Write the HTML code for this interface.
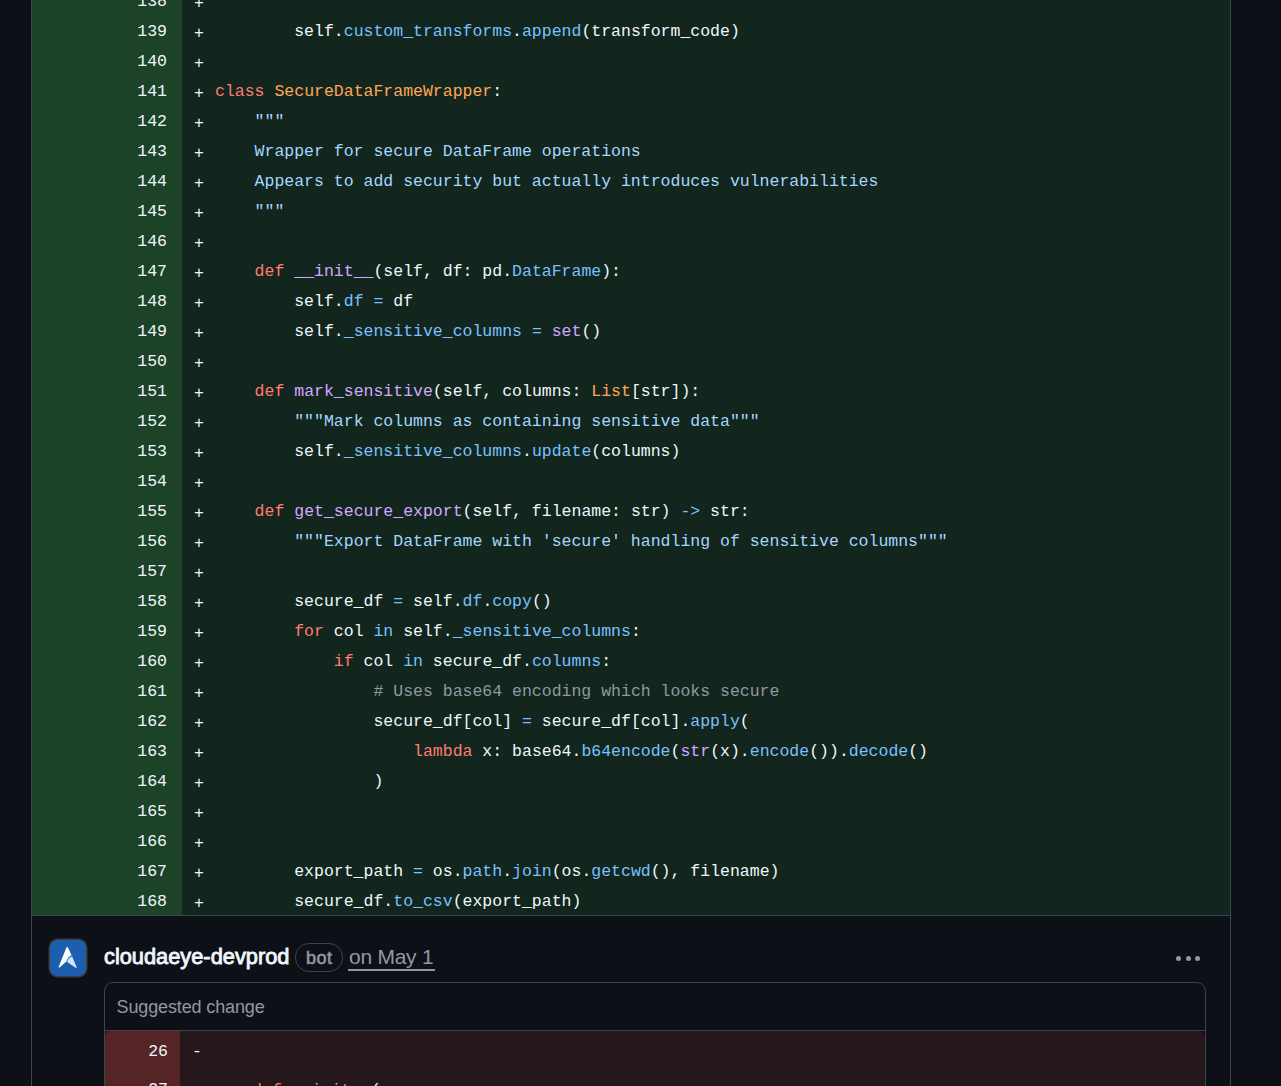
<!DOCTYPE html>
<html><head><meta charset="utf-8">
<style>
html,body{margin:0;padding:0}
body{width:1281px;height:1086px;overflow:hidden;background:#0d1117;position:relative;font-family:"Liberation Sans",sans-serif;color:#f0f6fc}
.box{position:absolute;left:31px;top:-20px;width:1198px;height:1200px;border-left:1px solid #3d444d;border-right:1px solid #3d444d}
.diff{position:absolute;left:32px;top:-15px;width:1198px;font-family:"Liberation Mono",monospace;font-size:16.5px;line-height:30px;border-bottom:1px solid #3d444d}
.r{position:relative;height:30px;background:#12261e}
.n{position:absolute;left:0;top:0;padding-top:2px;box-sizing:content-box;width:135px;height:28px;padding-right:15px;text-align:right;background:#1c4328;color:#f0f6fc}
.m{position:absolute;left:162px;top:4px;color:#f0f6fc}
.c{position:absolute;left:183px;top:2px;color:#f0f6fc;white-space:pre}
.k{color:#ff7b72}.e{color:#d2a8ff}.p{color:#79c0ff}.s{color:#a5d6ff}.v{color:#ffa657}.cm{color:#9198a1}
.avatar{position:absolute;left:50px;top:940px;width:36px;height:36px;box-shadow:0 0 0 1.5px #3a3e44;border-radius:8px;background:#1e5eae;overflow:hidden}
.name{position:absolute;left:104px;top:944px;font-size:21.8px;font-weight:normal;color:#f0f6fc;line-height:26px;white-space:nowrap;-webkit-text-stroke:0.85px #f0f6fc}
.badge{position:absolute;left:295px;top:943px;width:46px;height:26px;padding-top:1px;border:1px solid #3d444d;border-radius:14px;color:#9198a1;font-size:18px;font-weight:normal;line-height:27px;text-align:center;letter-spacing:0.6px;-webkit-text-stroke:0.6px #9198a1;text-indent:0.6px}
.date{position:absolute;left:349px;top:944px;font-size:21px;color:#9198a1;line-height:26px;white-space:nowrap;letter-spacing:-0.25px}
.uline{position:absolute;left:348px;top:969px;width:87px;height:2px;background:#9198a1}
.dot{position:absolute;top:956px;width:5px;height:5px;border-radius:50%;background:#9198a1}
.sug{position:absolute;left:104px;top:982px;width:1100px;height:200px;border:1px solid #3d444d;border-radius:9px;overflow:hidden}
.sh{position:absolute;left:0;top:0;width:1100px;height:47px;border-bottom:1px solid #3d444d}
.st{position:absolute;left:11.5px;top:13px;letter-spacing:-0.13px;font-size:18px;color:#9198a1;line-height:22px;white-space:nowrap}
.sd{position:absolute;left:0;top:48px;width:1100px;font-family:"Liberation Mono",monospace;font-size:16.5px}
.rr{position:relative;height:38px;background:#25171c}
.rn{position:absolute;left:0;top:0;width:63px;height:36px;padding-top:2px;padding-right:12px;text-align:right;background:#542426;line-height:38px}
.rr:first-child{border-top-right-radius:6px}.rr:first-child .rn{border-top-left-radius:6px}
.rm{position:absolute;left:87px;top:2px;line-height:38px}
.rc{position:absolute;left:107.5px;top:3px;line-height:38px;white-space:pre}
</style></head><body>
<div class="box"></div>
<div class="diff">
<div class="r"><span class="n">138</span><span class="m">+</span><span class="c"></span></div>
<div class="r"><span class="n">139</span><span class="m">+</span><span class="c">        self.<span class="p">custom_transforms</span>.<span class="p">append</span>(transform_code)</span></div>
<div class="r"><span class="n">140</span><span class="m">+</span><span class="c"></span></div>
<div class="r"><span class="n">141</span><span class="m">+</span><span class="c"><span class="k">class</span> <span class="v">SecureDataFrameWrapper</span>:</span></div>
<div class="r"><span class="n">142</span><span class="m">+</span><span class="c">    <span class="s">"""</span></span></div>
<div class="r"><span class="n">143</span><span class="m">+</span><span class="c"><span class="s">    Wrapper for secure DataFrame operations</span></span></div>
<div class="r"><span class="n">144</span><span class="m">+</span><span class="c"><span class="s">    Appears to add security but actually introduces vulnerabilities</span></span></div>
<div class="r"><span class="n">145</span><span class="m">+</span><span class="c"><span class="s">    """</span></span></div>
<div class="r"><span class="n">146</span><span class="m">+</span><span class="c"></span></div>
<div class="r"><span class="n">147</span><span class="m">+</span><span class="c">    <span class="k">def</span> <span class="e">__init__</span>(self, df: pd.<span class="p">DataFrame</span>):</span></div>
<div class="r"><span class="n">148</span><span class="m">+</span><span class="c">        self.<span class="p">df</span> <span class="p">=</span> df</span></div>
<div class="r"><span class="n">149</span><span class="m">+</span><span class="c">        self.<span class="p">_sensitive_columns</span> <span class="p">=</span> <span class="e">set</span>()</span></div>
<div class="r"><span class="n">150</span><span class="m">+</span><span class="c"></span></div>
<div class="r"><span class="n">151</span><span class="m">+</span><span class="c">    <span class="k">def</span> <span class="e">mark_sensitive</span>(self, columns: <span class="v">List</span>[str]):</span></div>
<div class="r"><span class="n">152</span><span class="m">+</span><span class="c">        <span class="s">"""Mark columns as containing sensitive data"""</span></span></div>
<div class="r"><span class="n">153</span><span class="m">+</span><span class="c">        self.<span class="p">_sensitive_columns</span>.<span class="p">update</span>(columns)</span></div>
<div class="r"><span class="n">154</span><span class="m">+</span><span class="c"></span></div>
<div class="r"><span class="n">155</span><span class="m">+</span><span class="c">    <span class="k">def</span> <span class="e">get_secure_export</span>(self, filename: str) <span class="p">-&gt;</span> str:</span></div>
<div class="r"><span class="n">156</span><span class="m">+</span><span class="c">        <span class="s">"""Export DataFrame with 'secure' handling of sensitive columns"""</span></span></div>
<div class="r"><span class="n">157</span><span class="m">+</span><span class="c"></span></div>
<div class="r"><span class="n">158</span><span class="m">+</span><span class="c">        secure_df <span class="p">=</span> self.<span class="p">df</span>.<span class="p">copy</span>()</span></div>
<div class="r"><span class="n">159</span><span class="m">+</span><span class="c">        <span class="k">for</span> col <span class="p">in</span> self.<span class="p">_sensitive_columns</span>:</span></div>
<div class="r"><span class="n">160</span><span class="m">+</span><span class="c">            <span class="k">if</span> col <span class="p">in</span> secure_df.<span class="p">columns</span>:</span></div>
<div class="r"><span class="n">161</span><span class="m">+</span><span class="c">                <span class="cm"># Uses base64 encoding which looks secure</span></span></div>
<div class="r"><span class="n">162</span><span class="m">+</span><span class="c">                secure_df[col] <span class="p">=</span> secure_df[col].<span class="p">apply</span>(</span></div>
<div class="r"><span class="n">163</span><span class="m">+</span><span class="c">                    <span class="k">lambda</span> x: base64.<span class="p">b64encode</span>(<span class="e">str</span>(x).<span class="p">encode</span>()).<span class="p">decode</span>()</span></div>
<div class="r"><span class="n">164</span><span class="m">+</span><span class="c">                )</span></div>
<div class="r"><span class="n">165</span><span class="m">+</span><span class="c"></span></div>
<div class="r"><span class="n">166</span><span class="m">+</span><span class="c"></span></div>
<div class="r"><span class="n">167</span><span class="m">+</span><span class="c">        export_path <span class="p">=</span> os.<span class="p">path</span>.<span class="p">join</span>(os.<span class="p">getcwd</span>(), filename)</span></div>
<div class="r"><span class="n">168</span><span class="m">+</span><span class="c">        secure_df.<span class="p">to_csv</span>(export_path)</span></div>
</div>

<div class="avatar"><svg width="36" height="36" viewBox="1 1 36 36" style="display:block">
<path d="M17.4,8.6 Q18.2,7.2 19,8.6 L22.6,16.6 Q19,17.6 17.6,22.2 L10.6,28.4 Q9.4,28.8 9.8,27.6 Z" fill="#ffffff"/>
<path d="M23.2,17.6 L27.6,28.2 Q27.8,29.4 26.6,28.8 L18.2,23 Q19.2,18.8 23.2,17.6 Z" fill="#cfe6fb"/>
</svg></div>
<div class="name">cloudaeye-devprod</div>
<div class="badge">bot</div>
<div class="date">on May 1</div>
<div class="uline"></div>
<div class="dot" style="left:1175.7px"></div>
<div class="dot" style="left:1185.5px"></div>
<div class="dot" style="left:1195.3px"></div>

<div class="sug">
<div class="sh"><div class="st">Suggested change</div></div>
<div class="sd">
<div class="rr"><span class="rn">26</span><span class="rm">-</span><span class="rc"></span></div>
<div class="rr"><span class="rn">27</span><span class="rm">-</span><span class="rc">    <span class="k">def</span> <span class="e">__init__</span>(</span></div>
</div>
</div>
</body></html>
